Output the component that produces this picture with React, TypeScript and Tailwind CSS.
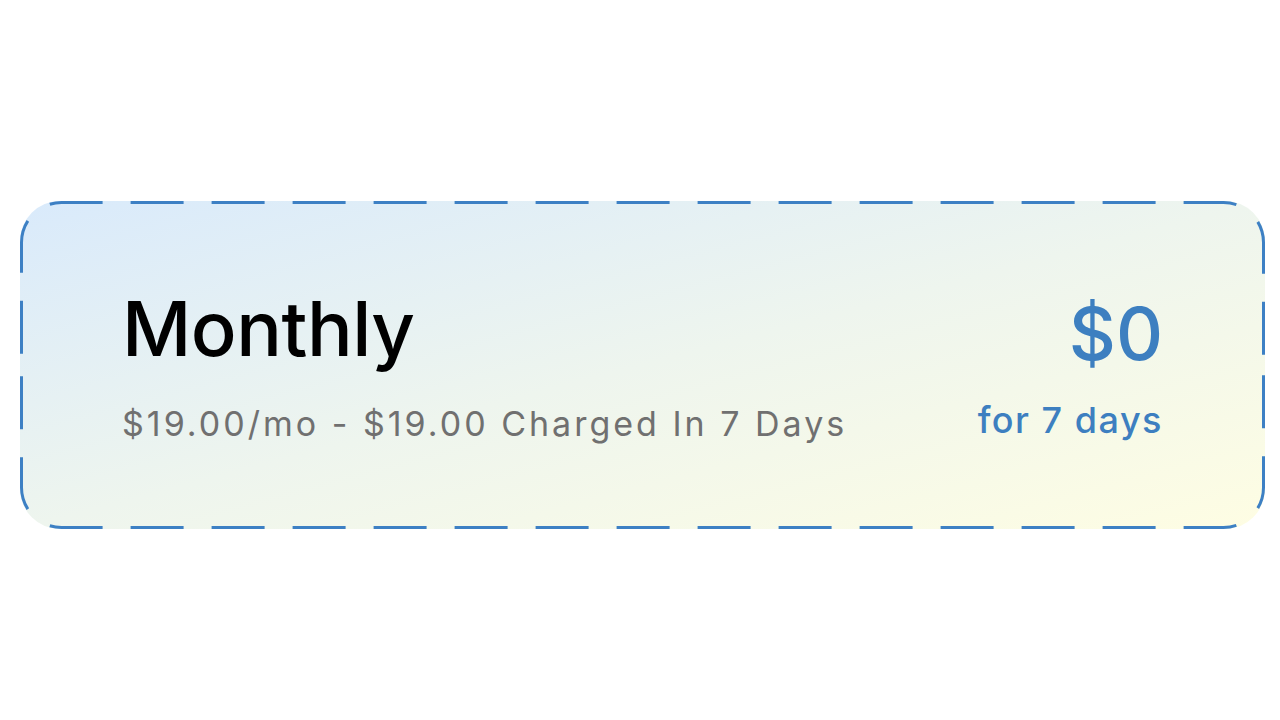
const dash = {
  fill: 'none',
  stroke: '#3d80c4',
  strokeWidth: 3,
  strokeDasharray: '53 28',
  strokeDashoffset: 69.67,
};

export default function App() {
  return (
    <div className="min-h-[720px] w-full bg-white pt-[201px]">
      <div className="relative ml-[20px] h-[328px] w-[1245px] rounded-[40px] bg-linear-to-br from-[#d9eafb] via-[#eef5ee] to-[#fefde3]">
        {/* dashed outline, drawn in two mirrored halves so top and bottom dashes line up */}
        <svg
          className="pointer-events-none absolute inset-0"
          width="1245"
          height="328"
          viewBox="0 0 1245 328"
        >
          <path d="M1.5 164 V41.5 A40 40 0 0 1 41.5 1.5 H1203.5 A40 40 0 0 1 1243.5 41.5 V164" {...dash} />
          <path d="M1.5 164 V286.5 A40 40 0 0 0 41.5 326.5 H1203.5 A40 40 0 0 0 1243.5 286.5 V164" {...dash} />
        </svg>
        <div className="flex h-full items-center justify-between px-[102px] font-['Inter',sans-serif]">
          <div className="flex flex-col">
            <span className="text-[76px] font-medium leading-none tracking-[-0.5px] text-black">Monthly</span>
            <span className="mt-[41px] text-[34px] leading-none tracking-[3px] text-[#707070]">
              $19.00/mo - $19.00 Charged In 7 Days
            </span>
          </div>
          <div className="flex flex-col items-end">
            <span className="mt-[4px] text-[73px] font-medium leading-none text-[#3d7fc0]">$0</span>
            <span className="mt-[32px] text-[36px] font-medium leading-none tracking-[1.5px] text-[#3d7fc0]">
              for 7 days
            </span>
          </div>
        </div>
      </div>
    </div>
  );
}
